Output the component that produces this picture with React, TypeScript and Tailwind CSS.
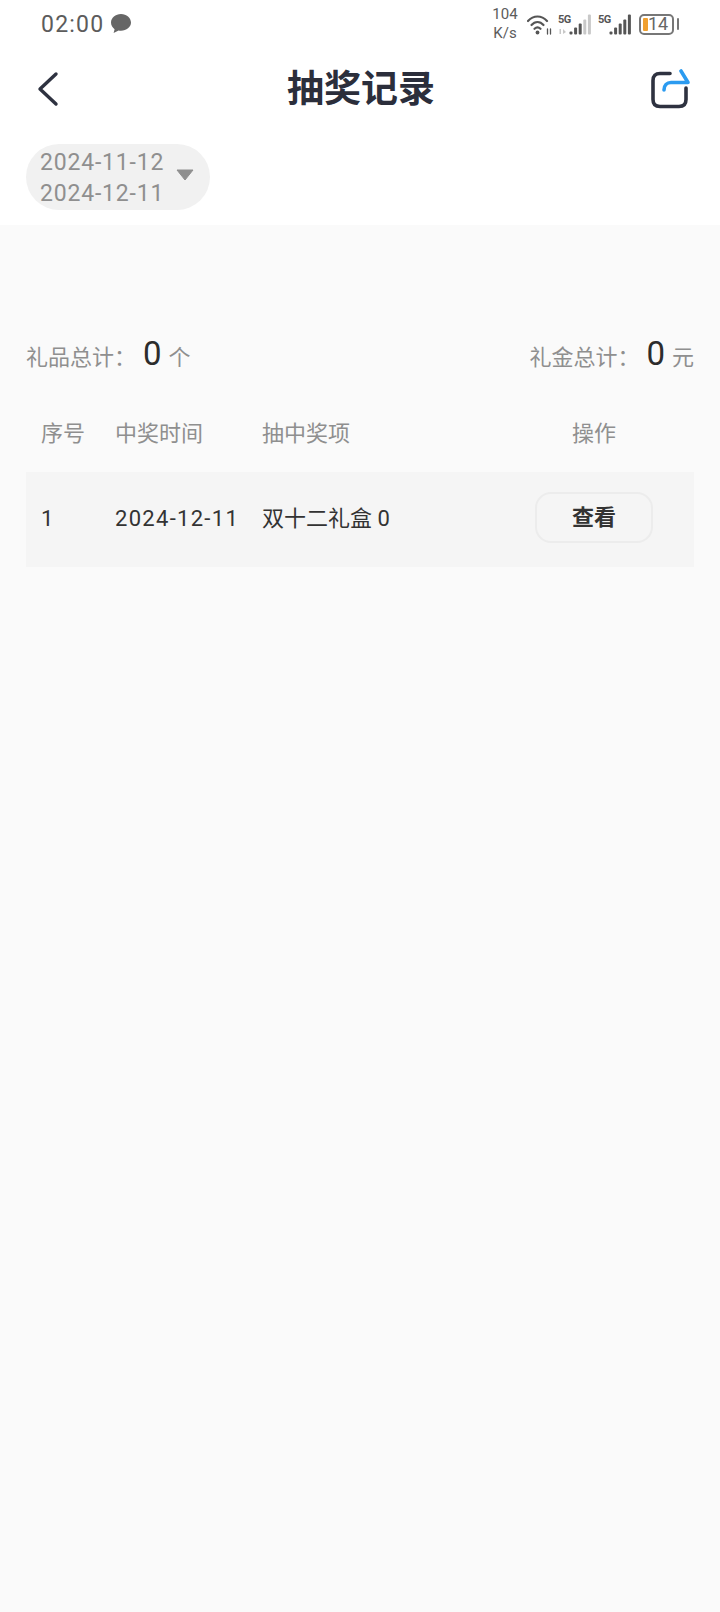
import React from 'react';

const font = "font-['Roboto','Noto_Sans_CJK_SC',sans-serif]";

const WifiIcon = () => (
  <svg width="25" height="21" viewBox="0 0 25 21" fill="none" stroke="#555" strokeWidth="2.200" strokeLinecap="round">
    <path d="M1 7C6.500 1 14.500 1 20 7" />
    <path d="M4.500 11C8 7 13 7 16.500 11" />
    <path d="M7.500 14.800C9.500 13 11.500 13 13.500 14.800" />
    <circle cx="10.500" cy="18.500" r="1.900" fill="#555" stroke="none" />
    <path d="M20.500 20v-5M23.500 15v5" strokeWidth="1.300" />
  </svg>
);

const Signal = ({ dim }: { dim?: boolean }) => {
  const heights = [3, 7, 11, 15, 20];
  return (
    <div className="relative h-[21px] w-[33px]">
      <span className="absolute left-0 top-0 text-[11px] font-bold leading-[11px] tracking-[-0.5px] text-[#555]">5G</span>
      <svg className="absolute left-0 top-0" width="33" height="21" viewBox="0 0 33 21">
        {heights.map((h, i) => (
          <rect
            key={i}
            x={11.500 + i * 4.600}
            y={20.500 - h}
            width="3"
            height={h}
            rx="1"
            fill={dim && i > 2 ? '#c8c8c8' : '#555'}
          />
        ))}
        {dim && <path d="M1.500 15h1.500v5H1.500zM5 20v-5l3 3z" fill="#c8c8c8" />}
      </svg>
    </div>
  );
};

const StatusBar = () => (
  <div className="flex h-[48px] items-center justify-between pl-[41px] pr-[41px]">
    <div className="flex items-center gap-[6px]">
      <span className="text-[23px] leading-none tracking-[1.2px] text-[#5c5c5c]">02:00</span>
      <svg width="22" height="22" viewBox="0 0 22 22">
        <path d="M11 1C5.500 1 1 4.800 1 9.600c0 2.700 1.400 5 3.600 6.600L3.600 20l5-2.400c.8.2 1.600.2 2.400.2 5.500 0 10-3.600 10-8.200S16.500 1 11 1z" fill="#666" />
      </svg>
    </div>
    <div className="flex items-center">
      <div className="flex w-[30px] flex-col items-center text-[15px] leading-[19px] text-[#5c5c5c]">
        <span>104</span>
        <span>K/s</span>
      </div>
      <div className="ml-[7px]">
        <WifiIcon />
      </div>
      <div className="ml-[6px]">
        <Signal dim />
      </div>
      <div className="ml-[7px]">
        <Signal />
      </div>
      <div className="ml-[8px] flex items-center gap-[3px]">
        <div className="flex h-[21px] w-[35px] items-center rounded-[5px] border-2 border-[#777] pl-[2px]">
          <div className="h-[13px] w-[5px] rounded-[1px] bg-[#f0a030]" />
          <span className="text-[18px] leading-none text-[#666]">14</span>
        </div>
        <div className="h-[12px] w-[2px] rounded-[1px] bg-[#777]" />
      </div>
    </div>
  </div>
);

const NavBar = () => (
  <div className="flex h-[84px] items-center justify-between pb-[2px] pl-[36px] pr-[30px]">
    <div className="w-[36px]">
      <svg width="24" height="36" viewBox="0 0 24 36" fill="none" stroke="#2e3240" strokeWidth="3.400" strokeLinecap="round" strokeLinejoin="round">
        <path d="M20 3L4 18l16 15" />
      </svg>
    </div>
    <h1 className="text-[37px] font-bold leading-none text-[#2b2e3b]">抽奖记录</h1>
    <svg width="40" height="40" viewBox="0 0 40 40" fill="none" strokeWidth="3.600" strokeLinecap="round" strokeLinejoin="round">
      <path d="M20 4.500H10C5.500 4.500 3 7 3 11.500v19C3 35 5.500 37.500 10 37.500h19c4.500 0 7-2.500 7-7V19" stroke="#2e3240" />
      <path d="M14 21c0-4.500 3-7.500 7-7.500h17L31 2" stroke="#2b9bf0" />
    </svg>
  </div>
);

const DateFilter = () => (
  <div className="h-[93px] bg-white px-[26px] pt-[12px]">
    <div className="flex h-[66px] w-[184px] items-center rounded-[33px] bg-[#f1f1f1] pl-[14px]">
      <div className="flex flex-col pt-[2px] text-[23px] leading-[31px] tracking-[0.8px] text-[#8f8f8f]">
        <span>2024-11-12</span>
        <span>2024-12-11</span>
      </div>
      <svg className="mb-[5px] ml-[11px]" width="20" height="12" viewBox="0 0 20 12">
        <path d="M2 1h16L10 11z" fill="#8f8f8f" stroke="#8f8f8f" strokeLinejoin="round" />
      </svg>
    </div>
  </div>
);

const Summary = ({ label, unit }: { label: string; unit: string }) => (
  <div className="flex items-baseline">
    <span className="text-[22px] leading-none text-[#8f8f8f]">{label}：</span>
    <span className="ml-[7px] text-[33px] leading-none text-[#2c2c2c]">0</span>
    <span className="ml-[7px] text-[22px] leading-none text-[#8f8f8f]">{unit}</span>
  </div>
);

export default function App() {
  return (
    <div className={`${font} flex min-h-[1612px] w-[720px] flex-col bg-[#fafafa]`}>
      <div className="bg-white">
        <StatusBar />
        <NavBar />
        <DateFilter />
      </div>

      <div className="px-[26px] pt-[112px]">
        <div className="flex items-center justify-between">
          <Summary label="礼品总计" unit="个" />
          <Summary label="礼金总计" unit="元" />
        </div>

        <div className="mt-[40px] flex h-[46px] items-center text-[22px] text-[#8f8f8f]">
          <span className="w-[74px] pl-[15px]">序号</span>
          <span className="w-[162px] pl-[15px]">中奖时间</span>
          <span className="flex-1">抽中奖项</span>
          <span className="mr-[41px] w-[118px] text-center">操作</span>
        </div>

        <div className="mt-[16px] flex h-[95px] items-center bg-[#f5f5f5] pb-[2px] text-[22px] text-[#333]">
          <span className="w-[74px] pl-[15px]">1</span>
          <span className="w-[162px] pl-[15px] tracking-[1.300px]">2024-12-11</span>
          <span className="flex-1">双十二礼盒 0</span>
          <button className="mb-[2px] mr-[41px] flex h-[51px] w-[118px] items-center justify-center rounded-[16px] border-2 border-[#ececec] text-[22px] font-bold text-[#333]">
            查看
          </button>
        </div>
      </div>
    </div>
  );
}
